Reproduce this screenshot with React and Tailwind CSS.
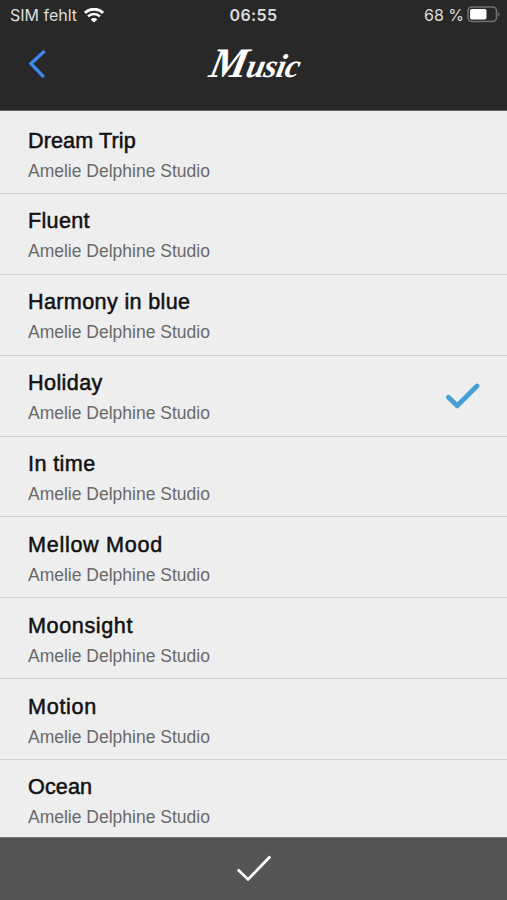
import React, { useState } from "react";

const tracks = [
  { title: "Dream Trip", spacing: "tracking-[0.1px]" },
  { title: "Fluent", spacing: "tracking-[0.3px]" },
  { title: "Harmony in blue", spacing: "tracking-[0.35px]" },
  { title: "Holiday", spacing: "tracking-[0.4px]" },
  { title: "In time", spacing: "tracking-[0.4px]" },
  { title: "Mellow Mood", spacing: "tracking-[0.7px]" },
  { title: "Moonsight", spacing: "tracking-[0.6px]" },
  { title: "Motion", spacing: "tracking-[0.7px]" },
  { title: "Ocean", spacing: "tracking-[0.1px]" },
];

const WifiIcon = () => (
  <svg width="20" height="15" viewBox="0 0 20 15" fill="none">
    <path d="M1 4.9a12.8 12.8 0 0 1 18 0" stroke="#fff" strokeWidth="2.9" />
    <path d="M4.1 8.4a8.4 8.4 0 0 1 11.8 0" stroke="#fff" strokeWidth="2.6" />
    <path d="M10 14.6 6.7 11.5a4.6 4.6 0 0 1 6.6 0Z" fill="#fff" />
  </svg>
);

const BatteryIcon = () => (
  <svg width="34" height="17" viewBox="0 0 34 17" fill="none" className="mb-[2px]">
    <rect x="1" y="1" width="28.5" height="14.5" rx="4" stroke="#727272" strokeWidth="1.6" />
    <rect x="3" y="3" width="16.5" height="10.5" rx="1.8" fill="#fff" />
    <path d="M31.2 6v4.6c1.8-.8 1.8-3.8 0-4.6Z" fill="#727272" />
  </svg>
);

const StatusBar = () => (
  <div className="grid h-[30px] grid-cols-3 items-center font-['Inter',sans-serif] text-base leading-none text-[#dedede]">
    <div className="flex items-center gap-[7px] pl-[10px]">
      <span className="whitespace-nowrap">SIM fehlt</span>
      <WifiIcon />
    </div>
    <span className="text-center font-semibold tracking-[0.4px]">06:55</span>
    <div className="flex items-center justify-end gap-[3px] pr-[6px]">
      <span className="whitespace-nowrap">68 %</span>
      <BatteryIcon />
    </div>
  </div>
);

const Header = () => (
  <header className="h-[111px] shrink-0 border-b border-[#666666] bg-[#282828]">
    <StatusBar />
    <div className="grid h-[68px] grid-cols-3 items-center">
      <button className="pl-7 text-[#3f86ee]" aria-label="Back">
        <svg width="20" height="30" viewBox="0 0 20 30" fill="none">
          <path d="M16.6 2 3 14.6 15.8 28" stroke="currentColor" strokeWidth="3.4" />
        </svg>
      </button>
      <h1 className="-skew-x-12 pr-1 pb-[2px] pl-2 text-center font-['Liberation_Serif',serif] text-[33px] leading-none font-bold tracking-[-0.5px] whitespace-nowrap text-white italic">
        <span className="text-[42px]">M</span>usic
      </h1>
    </div>
  </header>
);

const TrackRow = ({ track, selected, onSelect }) => (
  <li
    onClick={onSelect}
    className="flex h-[80.85px] shrink-0 items-center justify-between border-b border-[#d0d0d0] pr-[27px] pl-7"
  >
    <div className="pt-1">
      <p
        className={`text-[21.6px] leading-[28px] text-[#111111] [-webkit-text-stroke:0.5px_#111111] ${track.spacing}`}
      >
        {track.title}
      </p>
      <p className="mt-[3px] text-[17.5px] leading-[26px] text-[#696969]">
        Amelie Delphine Studio
      </p>
    </div>
    {selected && (
      <svg width="35" height="27" viewBox="0 0 35 27" fill="none">
        <path
          d="M3.5 15.2 12.2 23.8 32 4"
          stroke="#46a0d4"
          strokeWidth="4.8"
          strokeLinecap="round"
          strokeLinejoin="round"
        />
      </svg>
    )}
  </li>
);

const App = () => {
  const [selected, setSelected] = useState("Holiday");

  return (
    <div className="flex h-[900px] w-[507px] flex-col overflow-hidden bg-[#eeeeee] font-['Liberation_Sans',Arial,sans-serif]">
      <Header />
      <ul className="flex min-h-0 flex-1 flex-col overflow-hidden pt-[2.2px]">
        {tracks.map((track) => (
          <TrackRow
            key={track.title}
            track={track}
            selected={track.title === selected}
            onSelect={() => setSelected(track.title)}
          />
        ))}
      </ul>

      {/* Confirm bar */}
      <footer className="flex h-[63px] shrink-0 items-center justify-center border-t border-[#777777] bg-[#545454]">
        <button aria-label="Confirm">
          <svg width="36" height="28" viewBox="0 0 36 28" fill="none">
            <path d="M1.8 14.6 12 24.4 34.2 1.6" stroke="#fff" strokeWidth="2.8" />
          </svg>
        </button>
      </footer>
    </div>
  );
};

export default App;
